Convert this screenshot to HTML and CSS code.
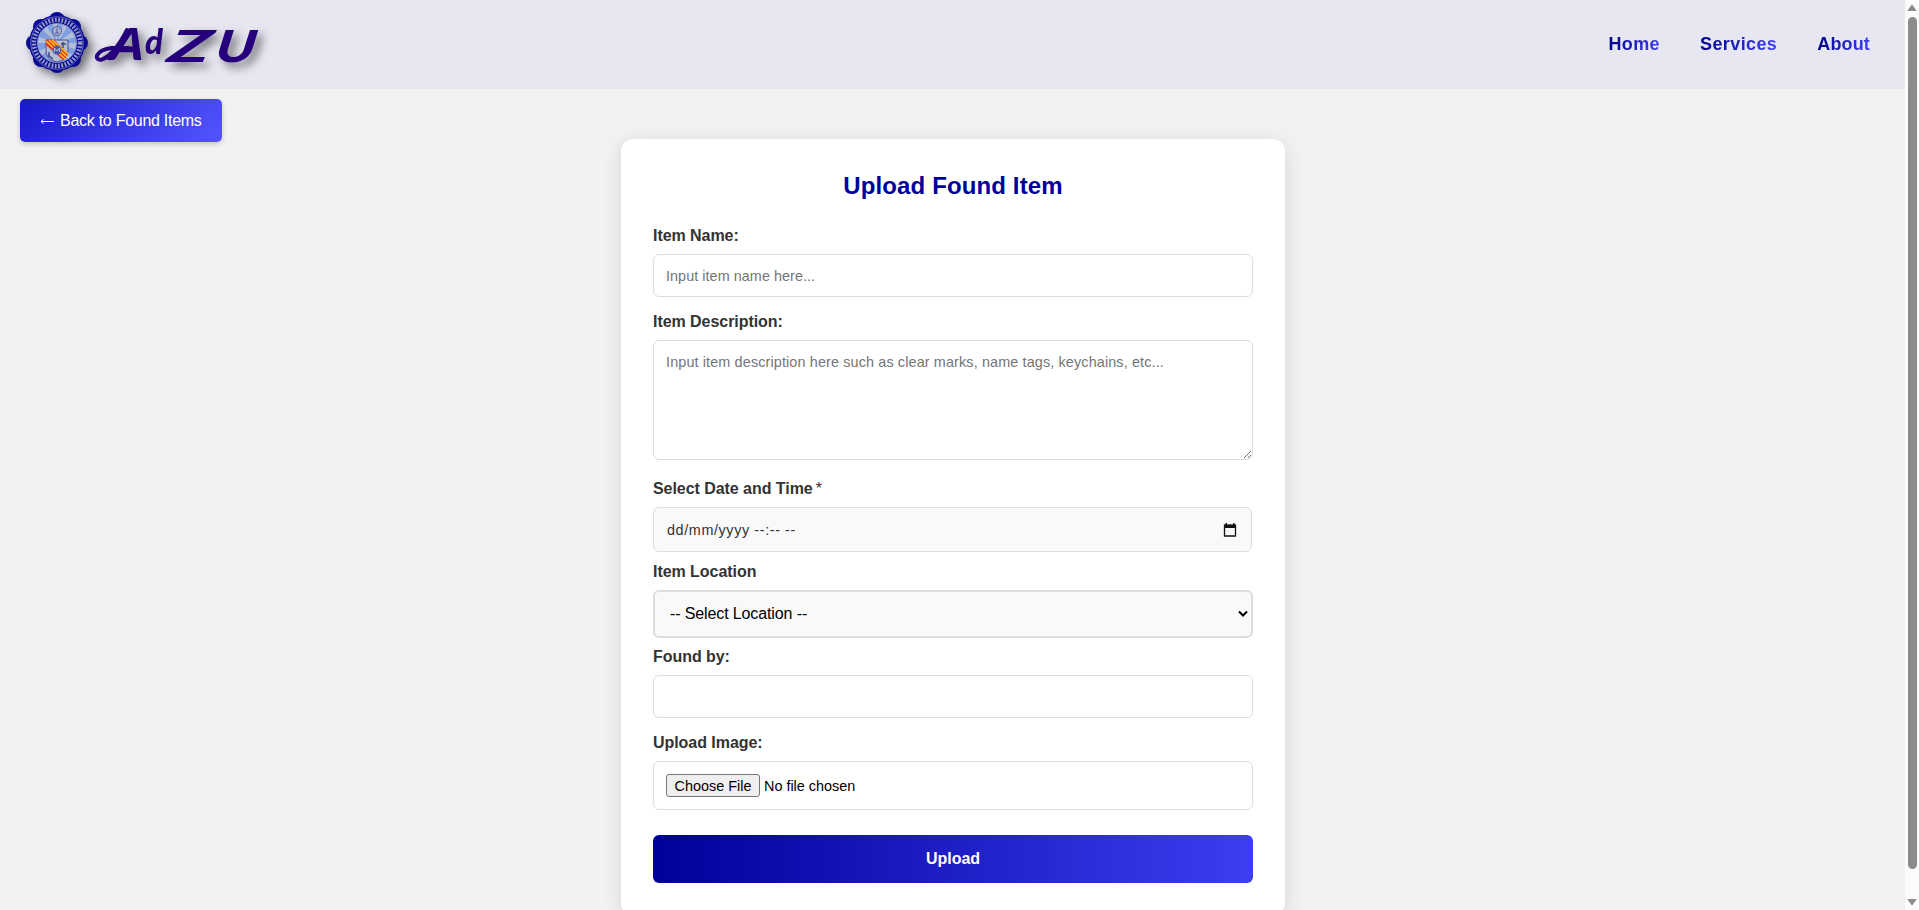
FILE: index.html
```html
<!DOCTYPE html>
<html lang="en">
<head>
<meta charset="utf-8">
<title>Upload Found Item</title>
<link rel="stylesheet" href="styles.css">
</head>
<body>
<div class="viewport">
<div class="page">
  <header class="header">
    <a class="brand" href="#" aria-label="AdZU">
      <svg class="logo" width="240" height="66" viewBox="0 0 240 66">
        <g transform="translate(32 33)">
          <g fill="#0a0a96">
            <circle r="28"/>
            <circle cx="0" cy="-23" r="8"/><circle cx="16" cy="-16" r="8"/><circle cx="23" cy="0" r="8"/><circle cx="16" cy="16" r="8"/>
            <circle cx="0" cy="22" r="8"/><circle cx="-16" cy="16" r="8"/><circle cx="-23" cy="0" r="8"/><circle cx="-16" cy="-16" r="8"/>
          </g>
          <circle r="23" fill="none" stroke="#9298c4" stroke-width="4.500" stroke-dasharray="1.800 1.500"/>
          <circle r="26.200" fill="none" stroke="#8b90c4" stroke-width=".7"/>
          <circle r="19.500" fill="#7f9fe0" stroke="#9aa0c6" stroke-width=".8"/>
          <path fill="#b3bfd9" d="M0 0-4-19h4zM0 0 6-18l4 2zM0 0 15-11l3 5zM0 0 19 0l-1 6zM0 0-10-16l-4 3zM0 0-18-6l-1 6zM0 0-18 8l3 4zM0 0 15 12l-4 4z"/>
          <circle cy="-12" r="4.500" fill="#a9b3cf" stroke="#525a93"/>
          <path d="M0-15v5M-2-10h4" stroke="#525a93"/>
          <path d="M-11-3H11V9Q10 17 0 19-10 17-11 9z" fill="#b7bed2" stroke="#47518e"/>
          <path d="M-11-3H-3L11 10Q10 15 6 17L-11 2z" fill="#f02c18"/>
          <path d="M-8-3 10 14M-11-2 8 16M-5-3 11 11" stroke="#ffd21c" stroke-width="1.300"/>
          <circle cy="7" r="4.500" fill="#4859a8"/>
          <path d="M-2.500 9V5L0 8l2.500-3v4" fill="none" stroke="#b7bed2"/>
          <path d="M6-1v6M4 1h5M-8 9v5M-9 12l5 4" stroke="#3a458b" stroke-width="1.400"/>
        </g>
        <path class="flourish" d="M102 20Q90 44 77 49.500q-6 1-5-4 3-6 14-7.500 13-1 24 1"/>
        <g class="logo-text">
          <text transform="translate(84 50) skewX(-8)" textLength="34" lengthAdjust="spacingAndGlyphs" font-size="44">A</text>
          <text x="120" y="44" textLength="18" lengthAdjust="spacingAndGlyphs" font-size="34">d</text>
          <text transform="translate(141 52) skewX(-12)" textLength="42" lengthAdjust="spacingAndGlyphs" font-size="44">Z</text>
          <text transform="translate(189 51.500) skewX(-9)" textLength="40" lengthAdjust="spacingAndGlyphs" font-size="44">U</text>
        </g>
      </svg>
    </a>
    <nav class="nav">
      <a class="link home" href="#">Home</a>
      <a class="link services" href="#">Services</a>
      <a class="link about" href="#">About</a>
    </nav>
  </header>
  <main class="main">
    <a class="back" href="#"><svg class="arrow" width="14" height="8" viewBox="0 0 14 8"><path d="M1 4.500h13M3.500 2.500 1 4.500l2.500 2" fill="none" stroke="#fff"/></svg><span>Back to Found Items</span></a>
    <form class="card">
      <h1 class="title">Upload Found Item</h1>
      <label class="label">Item Name:</label>
      <input class="field" type="text" placeholder="Input item name here...">
      <label class="label">Item Description:</label>
      <textarea class="field area" placeholder="Input item description here such as clear marks, name tags, keychains, etc..."></textarea>
      <label class="label">Select Date and Time<span class="star">*</span></label>
      <div class="field date"><span>dd/mm/yyyy --:-- --</span>
        <svg width="14" height="14" viewBox="0 0 14 14"><path d="M1.500 2.500h11v10.500h-11z" fill="none" stroke="#111" stroke-width="1.300"/><path d="M1 1.500h12V5H1zM2.500 0h1.500v2H2.500zM10 0h1.500v2H10z" fill="#111"/></svg>
      </div>
      <label class="label">Item Location</label>
      <div class="field select"><span>-- Select Location --</span>
        <svg width="10" height="8" viewBox="0 0 10 8"><path d="m1 1.500 4 4 4-4" fill="none" stroke="#000" stroke-width="2"/></svg>
      </div>
      <label class="label">Found by:</label>
      <input class="field" type="text">
      <label class="label">Upload Image:</label>
      <div class="field file"><button class="choose" type="button">Choose File</button><span>No file chosen</span></div>
      <button class="upload" type="button">Upload</button>
    </form>
  </main>
</div>
<div class="scrollbar">
  <svg width="10" height="8" viewBox="0 0 10 8"><path d="M5 1 9 6.500H1z" fill="#8b8b8b" stroke="#8b8b8b" stroke-linejoin="round"/></svg>
  <div class="thumb"></div>
  <svg width="10" height="8" viewBox="0 0 10 8"><path d="M5 7 1 1.500h8z" fill="#8b8b8b" stroke="#8b8b8b" stroke-linejoin="round"/></svg>
</div>
</div>
</body>
</html>
```

FILE: styles.css
```css
* { box-sizing: border-box; }
body { margin: 0; background: #f2f2f2; font-family: "Liberation Sans", Arial, sans-serif; font-size: 16px; color: #333; }
.viewport { display: flex; height: 910px; overflow: hidden; }
.page { flex: 1; height: 910px; overflow: hidden; }
.header { display: flex; justify-content: space-between; height: 89px; background: #e7e7f1; padding: 10px 35px 0 25px; }
.brand { height: 66px; }
.logo { display: block; overflow: visible; filter: drop-shadow(5px 5px 5px rgba(0,0,0,.5)); }
.logo-text { font-family: Lato, "Liberation Sans", sans-serif; font-weight: 900; font-style: italic; fill: #26007c; }
.flourish { fill: none; stroke: #26007c; stroke-width: 4; stroke-linecap: round; }
.nav { display: flex; gap: 40px; padding-top: 23px; }
.link { height: 22px; font-size: 18px; line-height: 22px; font-weight: bold; text-decoration: none; color: transparent; background: linear-gradient(90deg, #00008f, #3f3ff5); background-clip: text; -webkit-background-clip: text; white-space: nowrap; letter-spacing: .4px; }
.about { letter-spacing: .15px; }
.main { display: flex; flex-direction: column; }
.back { display: flex; align-items: center; gap: 6px; width: 202px; height: 43px; margin: 10px 0 0 20px; padding: 0 0 0 20px; border-radius: 5px; background: linear-gradient(135deg, #1818cc, #5555ff); color: #fff; text-decoration: none; box-shadow: 0 2px 5px rgba(0,0,0,.2); white-space: nowrap; letter-spacing: -.27px; }
.card { display: flex; flex-direction: column; width: 664px; height: 776px; margin: -3px 0 0 621px; padding: 32px; border-radius: 12px; background: #fff; box-shadow: 0 4px 20px rgba(0,0,0,.12); }
.title { margin: 0 0 24px; height: 30px; line-height: 30px; text-align: center; font-size: 24px; color: #000099; letter-spacing: .12px; }
.label { height: 22px; line-height: 22px; margin-bottom: 7px; font-weight: bold; letter-spacing: -.05px; flex: none; }
.star { margin-left: 3px; font-weight: normal; }
.field { flex: none; width: 600px; height: 43px; margin: 0 0 14px; padding: 0 12px; border: 1px solid #ddd; border-radius: 6px; background: #fff; font: 14.4px "Liberation Sans", Arial, sans-serif; }
.field::placeholder { color: #757575; opacity: 1; letter-spacing: .05px; }
.area { height: 120px; padding: 13px 12px 12px; margin-bottom: 18px; resize: vertical; }
.area::placeholder { letter-spacing: .13px; }
.date, .select, .file { display: flex; align-items: center; }
.date { width: 599px; height: 45px; padding: 0 14px 0 13px; justify-content: space-between; background: #f9f9f9; margin-bottom: 9px; letter-spacing: .6px; }
.select { height: 48px; border-width: 2px; padding: 0 3px 0 15px; justify-content: space-between; font-size: 16px; color: #000; background: #f9f9f9; margin-bottom: 8px; letter-spacing: -.12px; }
.file { height: 49px; gap: 4px; color: #000; margin-bottom: 25px; }
.choose { width: 94px; height: 23px; padding: 0; border: 1px solid #767676; border-radius: 3px; background: #efefef; font: inherit; color: #000; }
.upload { flex: none; height: 48px; border: 0; border-radius: 6px; background: linear-gradient(90deg, #000099, #3d3df2); color: #fff; font: bold 16px "Liberation Sans", Arial, sans-serif; }
.scrollbar { display: flex; flex-direction: column; align-items: center; justify-content: space-between; width: 14px; height: 910px; padding: 4px 0; background: #fcfcfc; }
.thumb { width: 9px; height: 852px; margin-bottom: 24px; border-radius: 5px; background: #8b8b8b; }
```
